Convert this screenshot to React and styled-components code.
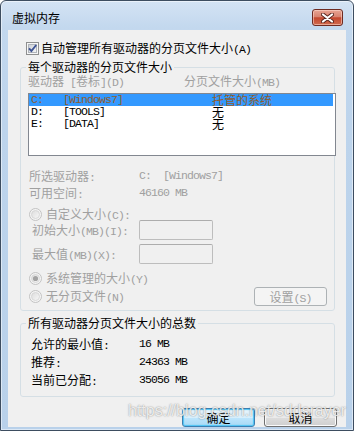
import React from "react";
import styled, { createGlobalStyle, css } from "styled-components";

const GlobalStyle = createGlobalStyle`
  html, body { margin: 0; padding: 0; background: #ffffff; }
  body {
    font-family: "Noto Sans CJK SC", "Noto Sans", sans-serif;
    font-size: 12px;
  }
  * { box-sizing: border-box; }
`;

const Window = styled.div`
  position: relative;
  width: 354px;
  height: 431px;
  display: flex;
  flex-direction: column;
  padding: 0 7px 7px;
  border: 1px solid #3d4d60;
  border-radius: 6px 6px 0 0;
  background: linear-gradient(180deg, #d4e3f4 0px, #c3d8ee 26px, #bdd4ec 120px, #b9d1ea 100%);
  box-shadow: inset 0 0 0 1px rgba(255, 255, 255, 0.5);
  overflow: hidden;
`;

const TitleBar = styled.div`
  flex: none;
  height: 29px;
  display: flex;
  align-items: center;
  justify-content: space-between;
  padding: 4px 3px 0 4px;
`;

const Title = styled.span`
  font-size: 12px;
  line-height: 14px;
  color: #000;
`;

const CloseButton = styled.div`
  width: 31px;
  height: 17px;
  display: flex;
  align-items: center;
  justify-content: center;
  border: 1px solid #6e2b22;
  border-radius: 3px;
  background: linear-gradient(180deg, #e8a493 0%, #d88370 45%, #c4472e 52%, #cf6a4e 100%);
  box-shadow: inset 0 0 0 1px rgba(255, 220, 210, 0.55);
`;

const Client = styled.div`
  flex: 1;
  display: flex;
  flex-direction: column;
  padding: 12px 11px 0 12px;
  background: #f0f0f0;
`;

const Latin = styled.span`
  font-family: "Liberation Mono", monospace;
  font-size: 11.5px;
  letter-spacing: -0.9px;
`;

const mixed = (text) =>
  text.split(/([\x20-\x7e]+)/).map((part, i) =>
    /^[\x20-\x7e]+$/.test(part) ? <Latin key={i}>{part}</Latin> : part ? <span key={i}>{part}</span> : null
  );

const CheckRow = styled.label`
  display: flex;
  align-items: center;
  gap: 2px;
  height: 13px;
  margin-left: 6px;
  line-height: 13px;
  color: #000;
  white-space: pre;
`;

const GroupBox = styled.fieldset`
  margin: 4px 0 0;
  padding: 0 7px ${(p) => p.$pb}px;
  min-width: 0;
  border: 1px solid #d5dfe5;
  border-radius: 3px;
`;

const Legend = styled.legend`
  padding: 0 2px;
  margin-left: -2px;
  line-height: 16px;
  color: #000;
  white-space: pre;
`;

const HeaderRow = styled.div`
  display: grid;
  grid-template-columns: 156px 1fr;
  line-height: 12px;
  color: #a0a0a0;
  white-space: pre;
`;

const ListBox = styled.div`
  margin: 4px -9px 0 0;
  height: 63px;
  border: 1px solid #828790;
  background: #ffffff;
`;

const ListRow = styled.div`
  display: grid;
  grid-template-columns: 32px 149px 1fr;
  height: 12px;
  line-height: 12px;
  padding-left: 2px;
  margin-right: 2px;
  white-space: pre;
  color: ${(p) => (p.$selected ? "#8e5d2f" : "#000")};
  background: ${(p) => (p.$selected ? "#3399ff" : "transparent")};
`;

const InfoGrid = styled.div`
  display: grid;
  grid-template-columns: ${(p) => p.$labelWidth}px 1fr;
  margin-top: ${(p) => p.$mt}px;
  padding-left: ${(p) => p.$pl}px;
  line-height: ${(p) => p.$lh}px;
  color: ${(p) => (p.$disabled ? "#a0a0a0" : "#000")};
  white-space: pre;
`;

const RadioRow = styled.div`
  display: flex;
  align-items: center;
  gap: 4px;
  height: 13px;
  padding-left: 1px;
  margin-top: ${(p) => p.$mt || 0}px;
  line-height: 13px;
  color: #a0a0a0;
  white-space: pre;
`;

const FormGrid = styled.div`
  display: grid;
  grid-template-columns: 107px 74px;
  row-gap: 4px;
  align-items: center;
  margin-top: -1px;
  padding-left: 4px;
  line-height: 13px;
  color: #a0a0a0;
  white-space: pre;
`;

const TextBox = styled.input`
  appearance: none;
  width: 74px;
  height: 20px;
  margin: 0;
  padding: 0;
  border: 1px solid #bdbdbd;
  border-top-color: #adadad;
  border-radius: 2px;
  background: #f0f0f0;
`;

const BottomRow = styled.div`
  display: flex;
  align-items: center;
  justify-content: space-between;
  margin-top: 2px;
  height: 19px;
`;

const buttonVariants = {
  normal: css`
    border: 1px solid #707070;
    color: #000;
    background: linear-gradient(180deg, #f2f2f2 0%, #ebebeb 50%, #dddddd 50%, #cfcfcf 100%);
    box-shadow: inset 0 0 0 1px #fbfbfb;
  `,
  primary: css`
    border: 1px solid #3c7fb1;
    color: #000;
    background: linear-gradient(180deg, #eaf6fd 0%, #d9f0fc 50%, #bee6fd 50%, #a7d9f5 100%);
    box-shadow: inset 0 0 1px 1px #4cc4f4;
  `,
  disabled: css`
    border: 1px solid #adb2b5;
    color: #a0a0a0;
    background: #f4f4f4;
  `,
};

const Button = styled.button`
  width: 73px;
  height: 19px;
  padding: 0;
  border-radius: 3px;
  font-family: inherit;
  font-size: 12px;
  line-height: 17px;
  white-space: pre;
  ${(p) => buttonVariants[p.$variant || "normal"]}
`;

const ButtonRow = styled.div`
  display: flex;
  justify-content: flex-end;
  gap: 9px;
  margin: 11px -2px 0 0;
`;

const Watermark = styled.div`
  position: absolute;
  left: 127px;
  top: 402px;
  font-family: "Liberation Sans", Arial, sans-serif;
  font-size: 16px;
  line-height: 16px;
  color: rgba(255, 255, 255, 0.82);
  text-shadow: 0 0 1.5px rgba(40, 40, 40, 0.6);
  pointer-events: none;
  white-space: nowrap;
`;

const CloseGlyph = () => (
  <svg width="13" height="10" viewBox="0 0 13 10">
    <path d="M2 1.5 L11 8.5 M11 1.5 L2 8.5" stroke="#5b2820" strokeWidth="4" strokeLinecap="round" fill="none" />
    <path d="M2 1.5 L11 8.5 M11 1.5 L2 8.5" stroke="#ffffff" strokeWidth="2.2" strokeLinecap="round" fill="none" />
  </svg>
);

const CheckIcon = () => (
  <svg width="13" height="13" viewBox="0 0 13 13">
    <defs>
      <linearGradient id="chkIn" x1="0" y1="0" x2="1" y2="1">
        <stop offset="0" stopColor="#cbcfd5" />
        <stop offset="1" stopColor="#f7f7f7" />
      </linearGradient>
    </defs>
    <rect x="0.5" y="0.5" width="12" height="12" fill="#f6f6f6" stroke="#8e8f8f" />
    <rect x="2.5" y="2.5" width="8" height="8" fill="url(#chkIn)" stroke="#b0b4ba" />
    <path d="M3 6.3 L5.4 9 L10.2 3" stroke="#3f5494" strokeWidth="1.9" fill="none" />
  </svg>
);

const RadioIcon = ({ checked }) => (
  <svg width="13" height="13" viewBox="0 0 13 13">
    <defs>
      <linearGradient id="radIn" x1="0" y1="0" x2="1" y2="1">
        <stop offset="0" stopColor="#dcdcdc" />
        <stop offset="1" stopColor="#f8f8f8" />
      </linearGradient>
    </defs>
    <circle cx="6.5" cy="6.5" r="6" fill="#f4f4f4" stroke="#c2c2c2" />
    <circle cx="6.5" cy="6.5" r="4" fill="url(#radIn)" stroke="#d2d2d2" strokeWidth="0.8" />
    {checked && <circle cx="6.5" cy="6.5" r="2.6" fill="#a3a3a3" />}
  </svg>
);

const drives = [
  { letter: "C:", label: "[Windows7]", size: "托管的系统", selected: true },
  { letter: "D:", label: "[TOOLS]", size: "无" },
  { letter: "E:", label: "[DATA]", size: "无" },
];

const totals = [
  ["允许的最小值:", "16 MB"],
  ["推荐:", "24363 MB"],
  ["当前已分配:", "35056 MB"],
];

export default function App() {
  return (
    <>
      <GlobalStyle />
      <Window>
        <TitleBar>
          <Title>虚拟内存</Title>
          <CloseButton>
            <CloseGlyph />
          </CloseButton>
        </TitleBar>
        <Client>
          <CheckRow>
            <CheckIcon />
            <span>{mixed("自动管理所有驱动器的分页文件大小(A)")}</span>
          </CheckRow>

          <GroupBox $pb={4}>
            <Legend>每个驱动器的分页文件大小</Legend>
            <HeaderRow>
              <span>{mixed("驱动器 [卷标](D)")}</span>
              <span>{mixed("分页文件大小(MB)")}</span>
            </HeaderRow>
            <ListBox>
              {drives.map((d) => (
                <ListRow key={d.letter} $selected={d.selected}>
                  <Latin>{d.letter}</Latin>
                  <Latin>{d.label}</Latin>
                  <span>{d.size}</span>
                </ListRow>
              ))}
            </ListBox>
            <InfoGrid $labelWidth={110} $mt={12} $pl={1} $lh={15} $disabled>
              <span>{mixed("所选驱动器:")}</span>
              <Latin>{"C:  [Windows7]"}</Latin>
              <span>{mixed("可用空间:")}</span>
              <Latin>46160 MB</Latin>
            </InfoGrid>
            <RadioRow $mt={6}>
              <RadioIcon />
              <span>{mixed("自定义大小(C):")}</span>
            </RadioRow>
            <FormGrid>
              <span>{mixed("初始大小(MB)(I):")}</span>
              <TextBox disabled />
              <span>{mixed("最大值(MB)(X):")}</span>
              <TextBox disabled />
            </FormGrid>
            <RadioRow $mt={8}>
              <RadioIcon checked />
              <span>{mixed("系统管理的大小(Y)")}</span>
            </RadioRow>
            <BottomRow>
              <RadioRow>
                <RadioIcon />
                <span>{mixed("无分页文件(N)")}</span>
              </RadioRow>
              <Button $variant="disabled" disabled>
                {mixed("设置(S)")}
              </Button>
            </BottomRow>
          </GroupBox>

          <GroupBox $pb={6}>
            <Legend>所有驱动器分页文件大小的总数</Legend>
            <InfoGrid $labelWidth={108} $mt={5} $pl={3} $lh={16}>
              {totals.map(([label, value]) => (
                <React.Fragment key={label}>
                  <span>{mixed(label)}</span>
                  <Latin>{value}</Latin>
                </React.Fragment>
              ))}
            </InfoGrid>
          </GroupBox>

          <ButtonRow>
            <Button $variant="primary">确定</Button>
            <Button>取消</Button>
          </ButtonRow>
        </Client>
        <Watermark>https://blog.csdn.net/sddsrayer</Watermark>
      </Window>
    </>
  );
}
